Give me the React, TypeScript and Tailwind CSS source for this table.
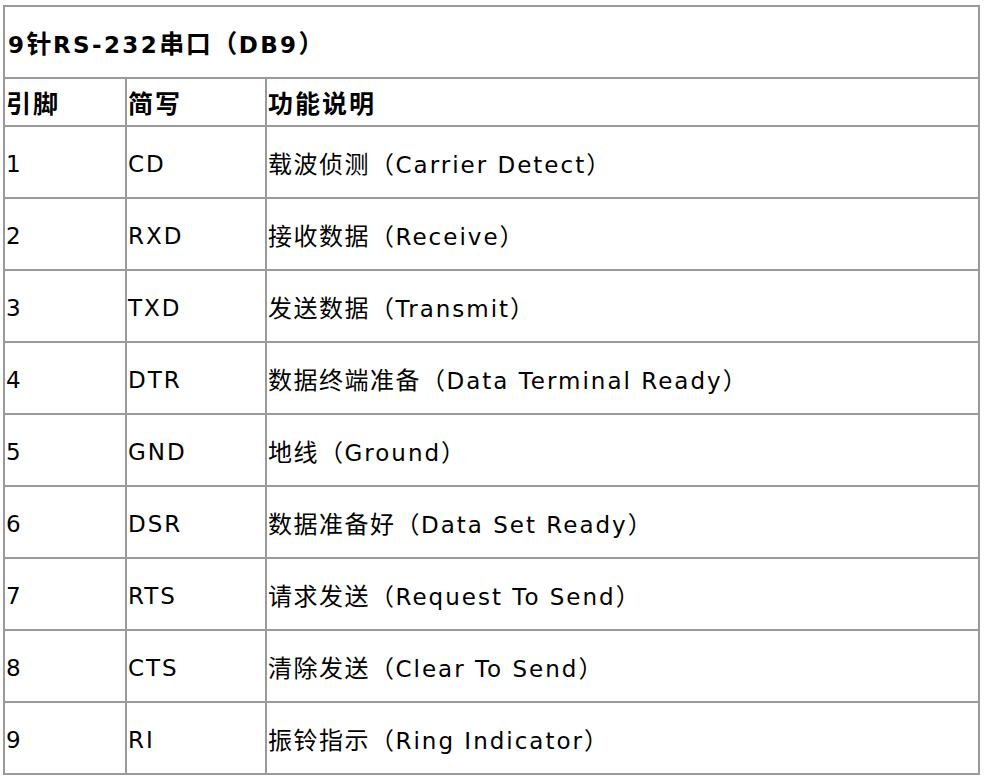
import React from "react";

const rows = [
  { pin: "1", abbr: "CD", cn: "载波侦测", en: "Carrier Detect" },
  { pin: "2", abbr: "RXD", cn: "接收数据", en: "Receive" },
  { pin: "3", abbr: "TXD", cn: "发送数据", en: "Transmit" },
  { pin: "4", abbr: "DTR", cn: "数据终端准备", en: "Data Terminal Ready" },
  { pin: "5", abbr: "GND", cn: "地线", en: "Ground" },
  { pin: "6", abbr: "DSR", cn: "数据准备好", en: "Data Set Ready" },
  { pin: "7", abbr: "RTS", cn: "请求发送", en: "Request To Send" },
  { pin: "8", abbr: "CTS", cn: "清除发送", en: "Clear To Send" },
  { pin: "9", abbr: "RI", cn: "振铃指示", en: "Ring Indicator" },
];

const cell = "border-2 border-[#9a9a9a] px-px pt-[5px] align-middle";
const cjk = "text-[24px] tracking-[1.5px]";
const cjkBold = "text-[25px] tracking-[2px]";

const App = () => {
  return (
    <div
      className="w-[984px] h-[778px] bg-white pt-[5px] pl-[3px] text-black text-[23px] tracking-[2px]"
      style={{ fontFamily: '"DejaVu Sans", "Noto Sans CJK SC", sans-serif' }}
    >
      <table className="w-[977px] border-collapse table-fixed">
        <colgroup>
          <col className="w-[122px]" />
          <col className="w-[140px]" />
          <col />
        </colgroup>
        <tbody>
          <tr className="h-[72px]">
            <td colSpan={3} className={`${cell} font-bold pl-[3px] tracking-[2.4px]`}>
              9<span className="text-[25px] tracking-[1.5px]">针</span>RS-232
              <span className="text-[25px] tracking-[1.5px]">串口（</span>DB9
              <span className="text-[25px] tracking-[1.5px]">）</span>
            </td>
          </tr>
          <tr className="h-[48px] font-bold">
            <td className={cell}>
              <span className={cjkBold}>引脚</span>
            </td>
            <td className={cell}>
              <span className={cjkBold}>简写</span>
            </td>
            <td className={cell}>
              <span className={cjkBold}>功能说明</span>
            </td>
          </tr>
          {rows.map((r) => (
            <tr key={r.pin} className="h-[72px]">
              <td className={cell}>{r.pin}</td>
              <td className={cell}>{r.abbr}</td>
              <td className={cell}>
                <span className={cjk}>{r.cn}（</span>
                {r.en}
                <span className={cjk}>）</span>
              </td>
            </tr>
          ))}
        </tbody>
      </table>
    </div>
  );
};

export default App;
